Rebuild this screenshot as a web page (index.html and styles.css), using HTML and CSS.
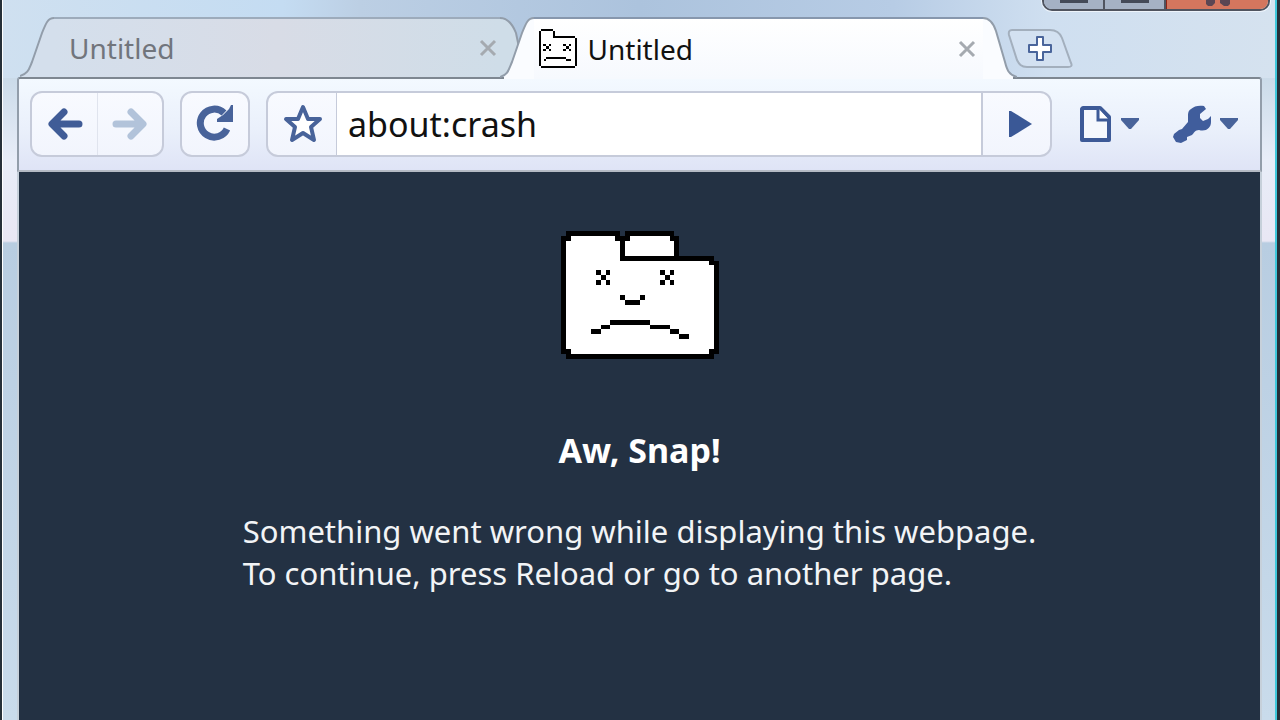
FILE: index.html
```html
<!DOCTYPE html>
<html lang="en">
<head>
<meta charset="utf-8">
<title>Untitled</title>
<link rel="stylesheet" href="styles.css">
</head>
<body>
<div class="window">
  <div class="window-controls">
    <button class="win-btn" aria-label="Minimize"><span class="win-glyph"></span></button>
    <button class="win-btn" aria-label="Maximize"><span class="win-glyph"></span></button>
    <button class="win-btn win-close" aria-label="Close"><svg width="28" height="6" viewBox="0 0 28 6"><path fill="#5b4653" d="M2 0H11V3L8 6H4L2 4ZM16 0H26V4L24 6H20L16 3Z"/></svg></button>
  </div>
  <div class="frame">
    <header class="tabstrip">
      <div class="tab">
        <svg class="tab-edge" width="34" height="60" viewBox="0 0 34 60" aria-hidden="true"><path class="tab-fill" d="M0 60C8 58 9 52 12 45L22 16C26 6 28 1 34 1V60Z"/><path class="tab-line" d="M0 59C8 57 9 52 12 45L22 16C26 6 28 1 34 1"/></svg>
        <div class="tab-body">
          <span class="tab-title">Untitled</span>
          <button class="tab-close" aria-label="Close tab"><svg width="18" height="18" viewBox="0 0 18 18"><path d="M2 2L16 16M16 2L2 16"/></svg></button>
        </div>
        <svg class="tab-edge" width="34" height="60" viewBox="0 0 34 60" aria-hidden="true"><path class="tab-fill tab-fill-end" d="M34 60C26 58 25 52 22 45L16 16C12 6 6 1 0 1V60Z"/><path class="tab-line" d="M34 59C26 57 25 52 22 45L16 16C12 6 6 1 0 1"/></svg>
      </div>
      <div class="tab tab-active">
        <svg class="tab-edge" width="34" height="62" viewBox="0 0 34 62" aria-hidden="true"><path class="tab-fill" d="M4 62V59C9 56 9 52 12 45L22 16C26 6 28 1 34 1V62Z"/><path class="tab-line" d="M0 60C8 58 9 52 12 45L22 16C26 6 28 1 34 1"/></svg>
        <div class="tab-body">
          <svg class="favicon" width="40" height="40" viewBox="0 0 40 40" shape-rendering="crispEdges" aria-hidden="true">
            <path fill="#fff" d="M2 2h13v7h22l1 29H2z"/>
            <path fill="#000" d="M3 0h12v2H3zM1 2h2v35H1zM15 2h2v6h-2zM15 7h22v2H15zM37 9h2v28h-2zM3 37h34v2H3zM5 15h3v2H5zM11 15h2v2h-2zM8 17h3v3H8zM5 20h3v2H5zM11 20h2v2h-2zM25 15h3v2h-3zM31 15h2v2h-2zM28 17h3v3h-3zM25 20h3v2h-3zM31 20h2v2h-2zM8 28h20v2H8zM6 30h2v2H6zM28 30h5v2h-5z"/>
          </svg>
          <span class="tab-title">Untitled</span>
          <button class="tab-close" aria-label="Close tab"><svg width="18" height="18" viewBox="0 0 18 18"><path d="M2 2L16 16M16 2L2 16"/></svg></button>
        </div>
        <svg class="tab-edge" width="34" height="62" viewBox="0 0 34 62" aria-hidden="true"><path class="tab-fill" d="M30 62V59C25 56 24 53 22 45L13 14C10 5 6 1 0 1V62Z"/><path class="tab-line" d="M34 60C26 58 24 53 22 45L13 14C10 5 6 1 0 1"/></svg>
      </div>
      <button class="new-tab" aria-label="New tab">
        <svg width="66" height="40" viewBox="0 0 66 40"><path fill="#d3e1f1" stroke="#a3afbd" stroke-width="2" d="M5 1H43C50 1 53 4 55 9L64 34Q66 38 61 38H20C14 38 12 35 10 31L2 6Q1 1 5 1Z"/><path fill="#fff" stroke="#4a659b" stroke-width="2" stroke-linejoin="round" d="M30 8h6v8h8v7h-8v8h-6v-8h-8v-7h8z"/></svg>
      </button>
    </header>
    <nav class="toolbar">
      <div class="group">
        <button class="tool" aria-label="Back"><svg width="36" height="34" viewBox="0 0 36 34"><path fill="none" stroke="#405c97" stroke-width="7" stroke-linecap="round" stroke-linejoin="round" d="M32 17H8M17 5L5 17L17 29"/></svg></button>
        <button class="tool tool-split" aria-label="Forward" disabled><svg width="36" height="34" viewBox="0 0 36 34"><path fill="none" stroke="#b2c3da" stroke-width="7" stroke-linecap="round" stroke-linejoin="round" d="M4 17H28M19 5L31 17L19 29"/></svg></button>
      </div>
      <div class="group">
        <button class="tool tool-reload" aria-label="Reload"><svg width="38" height="38" viewBox="0 0 38 38"><path fill="none" stroke="#48639a" stroke-width="7" d="M31 24A14 14 0 1 1 28 8"/><path fill="#48639a" d="M37 0V17H21V14L27 10L33 4L35 0Z"/></svg></button>
      </div>
      <form class="group omnibox">
        <button class="tool tool-star" type="button" aria-label="Bookmark"><svg width="40" height="40" viewBox="0 0 40 40"><path fill="#fff" stroke="#48639a" stroke-width="4" stroke-linejoin="round" d="M20 3L25 15L37 15L28 23L31 36L20 29L9 36L12 23L3 15L15 15Z"/></svg></button>
        <input class="address" type="text" aria-label="Address" value="about:crash" spellcheck="false">
        <button class="tool tool-go" type="button" aria-label="Go"><svg width="24" height="28" viewBox="0 0 24 28"><path fill="#3a5896" d="M1 1L3 1L24 14L3 27H1Z"/></svg></button>
      </form>
      <button class="menu" aria-label="Page menu">
        <svg width="34" height="38" viewBox="0 0 34 38"><path fill="#f5f8fd" stroke="#3d5a97" stroke-width="4" stroke-linejoin="round" d="M5 3H22L31 12V35H4V4Z"/><path fill="#fff" stroke="#3d5a97" stroke-width="3" d="M20 3V15H31"/></svg>
        <svg class="caret" width="18" height="12" viewBox="0 0 18 12"><path fill="#48639a" d="M0 0H18V2L10 11H8L0 2Z"/></svg>
      </button>
      <button class="menu menu-tools" aria-label="Tools menu">
        <svg width="38" height="38" viewBox="0 0 38 38"><path fill="#405d9c" d="M18 4C21 1 26 0 31 1L33 4L27 9V13L30 16L35 14L38 11V17C38 23 33 27 26 25C22 25 21 28 19 30L14 32V35L8 38L3 37L0 32L1 29L6 25L9 24L15 17V10C15 7 16 5 18 4Z"/></svg>
        <svg class="caret" width="18" height="12" viewBox="0 0 18 12"><path fill="#48639a" d="M0 0H18V2L10 11H8L0 2Z"/></svg>
      </button>
    </nav>
    <main class="page">
      <svg class="sad-folder" viewBox="0 0 32 26" shape-rendering="crispEdges" role="img" aria-label="Sad folder">
        <path fill="#fff" d="M1 1H23V6H31V25H1Z"/>
        <path fill="#000" d="M1 0h11v1H1zM13 0h10v1H13zM0 1h1v24H0zM1 1h1v1H1zM11 1h3v1H11zM22 1h1v1H22zM12 1h1v5H12zM23 1h1v5H23zM12 5h19v1H12zM30 6h2v1H30zM31 6h1v19H31zM1 24h1v1H1zM30 24h1v1H30zM1 25h30v1H1zM7 8h1v1H7zM9 8h1v1H9zM8 9h1v1H8zM7 10h1v1H7zM9 10h1v1H9zM20 8h1v1H20zM22 8h1v1H22zM21 9h1v1H21zM20 10h1v1H20zM22 10h1v1H22zM12 13h1v1H12zM16 13h1v1H16zM13 14h3v1H13zM10 18h8v1H10zM8 19h2v1H8zM18 19h4v1H18zM6 20h2v1H6zM22 20h2v1H22zM24 21h2v1H24z"/>
      </svg>
      <h1 class="headline">Aw, Snap!</h1>
      <p class="message">Something went wrong while displaying this webpage.<br>To continue, press Reload or go to another page.</p>
    </main>
  </div>
</div>
</body>
</html>
```
FILE: styles.css
```css
* { box-sizing: border-box; }

body {
  margin: 0;
  background: #263039;
  font-family: "Noto Sans", "Open Sans", sans-serif;
}

button {
  margin: 0;
  padding: 0;
  border: 0;
  background: none;
  font: inherit;
}

svg { display: block; flex: none; }

.window {
  position: relative;
  display: flex;
  min-height: 100vh;
  margin: 0 3px 0 2px;
  padding: 0 13px 0 14px;
  border-left: 1px solid #fff;
  border-right: 2px solid #3fc8dc;
  background:
    linear-gradient(90deg, #cfe0f0 0, #c4dcf2 22%, #bccfe4 28%, #acc3dd 50%, #b7cce5 70%, #cfdff0 82%, #d5e2ef 100%) 0 0 / 100% 78px no-repeat,
    linear-gradient(180deg, #cbdbe9 78px, #e8edf8 160px, #e9e7f4 241px, #b8cde1 243px, #c9dbeb 100%);
}

.window-controls {
  position: absolute;
  top: 0;
  right: 5px;
  display: flex;
  width: 228px;
  height: 11px;
  overflow: hidden;
  border: 2px solid #50545f;
  border-top: 0;
  border-radius: 0 0 10px 10px;
  box-shadow: 0 0 0 1px #eef4fb;
}

.win-btn {
  display: flex;
  flex: none;
  width: 61px;
  justify-content: center;
  background: #a5b1c4;
  border-right: 2px solid #50545f;
}

.win-close { flex: 1; background: #d4765e; border-right: 0; border-left: 1px solid #8d2417; }
.win-glyph { width: 28px; height: 3px; background: #444a58; }

.frame {
  display: flex;
  flex: 1;
  flex-direction: column;
  min-width: 0;
}

.tabstrip {
  display: flex;
  height: 77px;
  padding: 17px 249px 0 3px;
}

.tab {
  display: flex;
  flex: 1;
  min-width: 0;
  color: #71757c;
}

.tab-active {
  position: relative;
  flex: 1 1 4px;
  margin: 0 0 0 -34px;
  color: #111;
}

.tab-fill { fill: #d4dfec; }
.tab-fill-end { fill: #cfdde8; }
.tab-active .tab-fill { fill: #fafcff; }
.tab-line { fill: none; stroke: #929daa; stroke-width: 2; }

.tab-body {
  display: flex;
  flex: 1;
  align-items: center;
  min-width: 0;
  height: 60px;
  padding-left: 15px;
  border-top: 2px solid #9dabbb;
  background: linear-gradient(90deg, #d4dfec, #d8dce6 50%, #cfdde8);
}

.tab-active .tab-body {
  padding-left: 4px;
  height: 62px;
  border-top-color: #8797ad;
  background: linear-gradient(180deg, #fff, #f6f9fe);
}

.favicon { margin-right: 10px; }

.tab-title {
  flex: 1;
  font-size: 28px;
  line-height: 40px;
}

.tab-close path { fill: none; stroke: #a5aab0; stroke-width: 3; }
.tab-close { margin-right: 3px; }
.tab-active .tab-close { margin-right: 7px; }

.new-tab { align-self: flex-start; margin: 12px -60px 0 -10px; }

.toolbar {
  display: flex;
  align-items: center;
  height: 95px;
  padding: 0 22px 2px 11px;
  gap: 16px;
  border: 2px solid #929daa;
  border-top-color: #7e8791;
  border-bottom-color: #b4bac4;
  border-radius: 3px 3px 0 0;
  background: linear-gradient(180deg, #f3f9ff, #eaf0fb 55%, #dfe4f6);
}

.group {
  display: flex;
  height: 66px;
  overflow: hidden;
  border: 2px solid #c6cbda;
  border-radius: 12px;
  background: linear-gradient(180deg, #f8faff, #f2f5fd);
}

.tool {
  display: flex;
  align-items: center;
  justify-content: center;
  width: 65px;
}

.tool-split { border-left: 1px solid #e0e4ee; }
.tool-reload { width: 66px; }
.tool-star { width: 68px; padding-left: 2px; }
.tool-go { width: 67px; padding-left: 6px; }

.omnibox { flex: 1; min-width: 0; }

.address {
  flex: 1;
  min-width: 0;
  padding: 0 11px;
  border: 0;
  border-right: 2px solid #c6cbda;
  border-left: 1px solid #c6cbda;
  border-radius: 0;
  outline: 0;
  background: #fff;
  color: #111;
  font-family: inherit;
  font-size: 34px;
}

.menu {
  display: flex;
  align-items: center;
  gap: 9px;
  margin-left: 10px;
}

.menu-tools { margin-left: 18px; }

.page {
  display: flex;
  flex: 1;
  flex-direction: column;
  align-items: center;
  padding: 59px 20px 40px;
  border: solid #c6d0da;
  border-width: 0 2px;
  background: #233143;
  color: #f2f4f6;
}

.sad-folder { width: 158px; height: 128px; }

.headline {
  margin: 66px 0 0;
  color: #fff;
  font-size: 34px;
  line-height: 50px;
}

.message {
  margin: 35px 0 0;
  font-size: 31px;
  line-height: 42px;
}
```
